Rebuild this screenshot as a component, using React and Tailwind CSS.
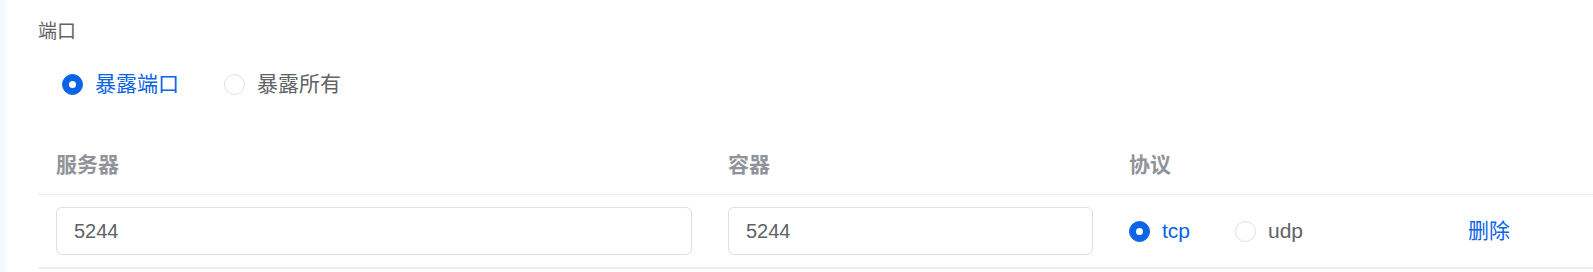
import React, { useState } from 'react';

const font = { fontFamily: '"Liberation Sans", "Noto Sans CJK SC", sans-serif' };

const Radio = ({ checked, label, onClick, className = '' }) => {
  return (
    <label className={`flex items-center cursor-pointer ${className}`} onClick={onClick}>
      <span
        className={`w-[21px] h-[21px] rounded-full border flex items-center justify-center ${
          checked ? 'bg-[#0b63e5] border-[#0b63e5]' : 'bg-white border-[#dcdfe6]'
        }`}
      >
        {checked && <span className="w-[7px] h-[7px] rounded-full bg-white"></span>}
      </span>
      <span className={`ml-[12px] text-[21px] leading-[30px] ${checked ? 'text-[#0b63e5]' : 'text-[#606266]'}`}>
        {label}
      </span>
    </label>
  );
};

const App = () => {
  const [mode, setMode] = useState('port');
  const [proto, setProto] = useState('tcp');
  const [host, setHost] = useState('5244');
  const [container, setContainer] = useState('5244');

  return (
    <div className="flex h-[272px] bg-white overflow-hidden" style={font}>
      <div className="w-[6px] shrink-0 bg-[#f5f8fd]"></div>
      <div className="flex-1 pl-[32px] pt-[18px]">
        <div className="text-[19px] leading-[28px] text-[#606266]">端口</div>

        <div className="flex items-center mt-[23px] pl-[24px]">
          <Radio checked={mode === 'port'} label="暴露端口" onClick={() => setMode('port')} className="mr-[45px]" />
          <Radio checked={mode === 'all'} label="暴露所有" onClick={() => setMode('all')} />
        </div>

        <div className="mt-[37px]">
          <div className="grid grid-cols-[672px_401px_339px_1fr] border-b border-[#ebeef5]">
            <div className="px-[18px] py-[12px] text-[21px] leading-[34px] font-semibold text-[#909399]">服务器</div>
            <div className="px-[18px] py-[12px] text-[21px] leading-[34px] font-semibold text-[#909399]">容器</div>
            <div className="px-[18px] py-[12px] text-[21px] leading-[34px] font-semibold text-[#909399]">协议</div>
            <div className="px-[18px] py-[12px]"></div>
          </div>
          <div className="grid grid-cols-[672px_401px_339px_1fr] items-center border-b-2 border-[#ebeef5]">
            <div className="px-[18px] py-[12px]">
              <input
                value={host}
                onChange={(e) => setHost(e.target.value)}
                className="w-full h-[48px] px-[17px] rounded-[6px] border border-[#dcdfe6] text-[20px] text-[#606266] outline-none"
                style={font}
              />
            </div>
            <div className="px-[18px] py-[12px]">
              <input
                value={container}
                onChange={(e) => setContainer(e.target.value)}
                className="w-full h-[48px] px-[17px] rounded-[6px] border border-[#dcdfe6] text-[20px] text-[#606266] outline-none"
                style={font}
              />
            </div>
            <div className="px-[18px] py-[12px] flex items-center">
              <Radio checked={proto === 'tcp'} label="tcp" onClick={() => setProto('tcp')} className="mr-[45px]" />
              <Radio checked={proto === 'udp'} label="udp" onClick={() => setProto('udp')} />
            </div>
            <div className="px-[18px] py-[12px]">
              <button className="text-[21px] leading-[30px] text-[#0b63e5]">删除</button>
            </div>
          </div>
        </div>
      </div>
    </div>
  );
};

export default App;
